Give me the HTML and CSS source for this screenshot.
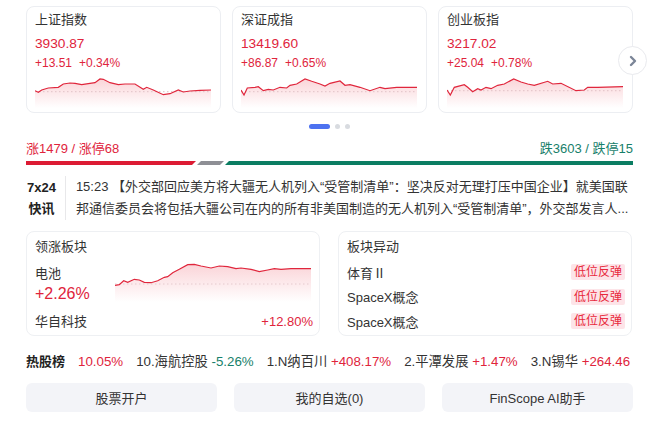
FILE: index.html
```html
<!DOCTYPE html>
<html lang="zh">
<head>
<meta charset="utf-8">
<link rel="stylesheet" href="styles.css">
</head>
<body>
<div class="page">
  <div class="carousel">
    <div class="cards">
      <div class="card">
        <div class="c-title">上证指数</div>
        <div class="c-value">3930.87</div>
        <div class="c-change"><span>+13.51</span><span>+0.34%</span></div>
        <svg class="spark" viewBox="0 0 176 30" preserveAspectRatio="none">
          <defs><linearGradient id="g1" x1="0" y1="0" x2="0" y2="1"><stop offset="0" stop-color="#e8283c" stop-opacity="0.2"/><stop offset="1" stop-color="#e8283c" stop-opacity="0"/></linearGradient></defs>
          <path d="M0,12.7 L3.3,14.3 L6.7,12 L13.3,10 L23.3,9.3 L28.3,6 L35,5 L40,5.3 L46.7,6.7 L53.3,5.7 L60,4.7 L65,0.9 L68.3,1.3 L75,4.7 L83.3,6.7 L90,6 L100,6 L108.3,11.3 L111.7,9.3 L118.3,12 L128.3,16.7 L135,15.7 L143.3,12 L148.3,14 L155,13 L165,12.3 L176,12 L176,30 L0,30 Z" fill="url(#g1)"/>
          <line x1="0" y1="13.7" x2="176" y2="13.7" stroke="#e6c9cd" stroke-width="1.2" stroke-dasharray="1.5 2.5"/>
          <polyline points="0,12.7 3.3,14.3 6.7,12 13.3,10 23.3,9.3 28.3,6 35,5 40,5.3 46.7,6.7 53.3,5.7 60,4.7 65,0.9 68.3,1.3 75,4.7 83.3,6.7 90,6 100,6 108.3,11.3 111.7,9.3 118.3,12 128.3,16.7 135,15.7 143.3,12 148.3,14 155,13 165,12.3 176,12" fill="none" stroke="#e0263c" stroke-width="1.2"/>
        </svg>
      </div>
      <div class="card">
        <div class="c-title">深证成指</div>
        <div class="c-value">13419.60</div>
        <div class="c-change"><span>+86.87</span><span>+0.65%</span></div>
        <svg class="spark" viewBox="0 0 176 30" preserveAspectRatio="none">
          <defs><linearGradient id="g2" x1="0" y1="0" x2="0" y2="1"><stop offset="0" stop-color="#e8283c" stop-opacity="0.2"/><stop offset="1" stop-color="#e8283c" stop-opacity="0"/></linearGradient></defs>
          <path d="M0,12 L3,17 L6.3,10 L14,9.3 L17.3,8.7 L22.3,12.7 L27.3,11.3 L32.3,12 L39,9.3 L45.7,10 L49,7.3 L55.7,6 L64,0.9 L70.7,3.3 L79,6 L84,8 L89,5.3 L99,3 L104,7.3 L109,6.7 L119,9.3 L129,12.7 L139,9.3 L144,10.7 L155.7,9.3 L176,9.3 L176,30 L0,30 Z" fill="url(#g2)"/>
          <line x1="0" y1="13.7" x2="176" y2="13.7" stroke="#e6c9cd" stroke-width="1.2" stroke-dasharray="1.5 2.5"/>
          <polyline points="0,12 3,17 6.3,10 14,9.3 17.3,8.7 22.3,12.7 27.3,11.3 32.3,12 39,9.3 45.7,10 49,7.3 55.7,6 64,0.9 70.7,3.3 79,6 84,8 89,5.3 99,3 104,7.3 109,6.7 119,9.3 129,12.7 139,9.3 144,10.7 155.7,9.3 176,9.3" fill="none" stroke="#e0263c" stroke-width="1.2"/>
        </svg>
      </div>
      <div class="card">
        <div class="c-title">创业板指</div>
        <div class="c-value">3217.02</div>
        <div class="c-change"><span>+25.04</span><span>+0.78%</span></div>
        <svg class="spark" viewBox="0 0 176 30" preserveAspectRatio="none">
          <defs><linearGradient id="g3" x1="0" y1="0" x2="0" y2="1"><stop offset="0" stop-color="#e8283c" stop-opacity="0.2"/><stop offset="1" stop-color="#e8283c" stop-opacity="0"/></linearGradient></defs>
          <path d="M0,12 L3.3,17 L7.3,9.3 L17.3,6.7 L20.7,9.3 L25.7,13.7 L30.7,10.7 L34,12 L39,9.3 L44,10.7 L50.7,7.3 L57.3,6 L66.7,0.9 L74,4 L80.7,6 L87.3,7.3 L100.7,3.3 L105.7,6 L114,5.3 L129,12.7 L137.3,12 L140.7,9.3 L150.7,9.3 L176,8.7 L176,30 L0,30 Z" fill="url(#g3)"/>
          <line x1="0" y1="12.7" x2="176" y2="12.7" stroke="#e6c9cd" stroke-width="1.2" stroke-dasharray="1.5 2.5"/>
          <polyline points="0,12 3.3,17 7.3,9.3 17.3,6.7 20.7,9.3 25.7,13.7 30.7,10.7 34,12 39,9.3 44,10.7 50.7,7.3 57.3,6 66.7,0.9 74,4 80.7,6 87.3,7.3 100.7,3.3 105.7,6 114,5.3 129,12.7 137.3,12 140.7,9.3 150.7,9.3 176,8.7" fill="none" stroke="#e0263c" stroke-width="1.2"/>
        </svg>
      </div>
    </div>
    <div class="next-btn">
      <svg viewBox="0 0 12 12" width="12" height="12"><polyline points="4,2 8,6 4,10" fill="none" stroke="#7b8597" stroke-width="2.4" stroke-linecap="round" stroke-linejoin="round"/></svg>
    </div>
  </div>

  <div class="dots"><span class="dot active"></span><span class="dot"></span><span class="dot"></span></div>

  <div class="breadth">
    <span class="up">涨1479 / 涨停68</span>
    <span class="down">跌3603 / 跌停15</span>
  </div>
  <div class="bar">
    <span class="seg seg-red"></span>
    <span class="seg seg-grey"></span>
    <span class="seg seg-green"></span>
  </div>

  <div class="news">
    <div class="news-label"><div>7x24</div><div>快讯</div></div>
    <div class="news-text">15:23 【外交部回应美方将大疆无人机列入“受管制清单”：坚决反对无理打压中国企业】就美国联邦通信委员会将包括大疆公司在内的所有非美国制造的无人机列入“受管制清单”，外交部发言人...</div>
  </div>

  <div class="sectors">
    <div class="s-card">
      <div class="s-title">领涨板块</div>
      <div class="s-main">
        <div class="s-left">
          <div class="s-name">电池</div>
          <div class="s-pct">+2.26%</div>
        </div>
        <svg class="s-chart" viewBox="0 0 196 41" preserveAspectRatio="none">
          <defs><linearGradient id="g4" x1="0" y1="0" x2="0" y2="1"><stop offset="0" stop-color="#e8283c" stop-opacity="0.2"/><stop offset="1" stop-color="#e8283c" stop-opacity="0"/></linearGradient></defs>
          <path d="M0,24.3 L4.3,23.7 L8.7,19.7 L12.7,21.3 L19.3,18.3 L24.3,19 L29.3,21.3 L36,21.7 L42.7,19.7 L49.3,16.3 L52.7,15.7 L57.7,11.7 L64.3,8.3 L72.7,3.7 L79.3,3.3 L86,5 L96,7 L104.3,5 L112.7,5.7 L121,7.7 L126,7 L136,8.3 L144.3,10.7 L152.7,9 L159.3,7.7 L166,8.3 L176,7.7 L196,7.7 L196,41 L0,41 Z" fill="url(#g4)"/>
          <line x1="0" y1="23" x2="196" y2="23" stroke="#e6c9cd" stroke-width="1.2" stroke-dasharray="1.5 2.5"/>
          <polyline points="0,24.3 4.3,23.7 8.7,19.7 12.7,21.3 19.3,18.3 24.3,19 29.3,21.3 36,21.7 42.7,19.7 49.3,16.3 52.7,15.7 57.7,11.7 64.3,8.3 72.7,3.7 79.3,3.3 86,5 96,7 104.3,5 112.7,5.7 121,7.7 126,7 136,8.3 144.3,10.7 152.7,9 159.3,7.7 166,8.3 176,7.7 196,7.7" fill="none" stroke="#e0263c" stroke-width="1.2"/>
        </svg>
      </div>
      <div class="s-foot"><span>华自科技</span><span class="red">+12.80%</span></div>
    </div>
    <div class="s-card">
      <div class="s-title">板块异动</div>
      <div class="s-row"><span>体育<span class="cjk">Ⅱ</span></span><span class="tag">低位反弹</span></div>
      <div class="s-row"><span>SpaceX概念</span><span class="tag">低位反弹</span></div>
      <div class="s-row"><span>SpaceX概念</span><span class="tag">低位反弹</span></div>
    </div>
  </div>

  <div class="hot">
    <span class="hot-title">热股榜</span>
    <span class="red">10.05%</span>
    <span>10.海航控股 <span class="green">-5.26%</span></span>
    <span>1.N纳百川 <span class="red">+408.17%</span></span>
    <span>2.平潭发展 <span class="red">+1.47%</span></span>
    <span>3.N锡华 <span class="red">+264.46</span></span>
  </div>

  <div class="buttons">
    <div class="btn">股票开户</div>
    <div class="btn">我的自选(0)</div>
    <div class="btn">FinScope AI助手</div>
  </div>
</div>
</body>
</html>
```

FILE: styles.css
```css
* { box-sizing: border-box; }
html, body { margin: 0; padding: 0; background: #fff; }
body {
  font-family: "Liberation Sans", Arial, "Noto Sans CJK SC", sans-serif;
  color: #333;
  font-size: 13px;
  overflow: hidden;
}
.page {
  width: 607px;
  margin-left: 26px;
  padding-top: 6px;
}
.carousel { position: relative; }
.cards {
  display: grid;
  grid-template-columns: repeat(3, 1fr);
  column-gap: 11px;
  width: 606px;
}
.card {
  border: 1px solid #eceef2;
  border-radius: 8px;
  padding: 4px 9px 4px 8px;
  height: 107px;
  display: flex;
  flex-direction: column;
}
.c-title { font-size: 13px; line-height: 18px; color: #333; }
.c-value { font-size: 13.7px; line-height: 20px; margin-top: 5px; color: #e0243c; }
.c-change { font-size: 12px; line-height: 18px; color: #e0243c; display: flex; gap: 7px; }
.spark { display: block; width: 176px; height: 30px; margin-top: 6px; }
.next-btn {
  position: absolute;
  left: 592px;
  top: 40px;
  width: 29px;
  height: 29px;
  border-radius: 50%;
  background: #fff;
  border: 1px solid #e9eaee;
  display: flex;
  align-items: center;
  justify-content: center;
}
.next-btn svg { display: block; }
.dots {
  display: flex;
  justify-content: center;
  gap: 5px;
  margin-top: 11px;
}
.dot { width: 5px; height: 5px; border-radius: 3px; background: #d8dbe0; }
.dot.active { width: 21px; background: #4d72f0; }
.breadth {
  display: flex;
  justify-content: space-between;
  margin-top: 11px;
  font-size: 13px;
  line-height: 18px;
}
.up { color: #e0243c; }
.down { color: #17806a; }
.bar { display: flex; gap: 1px; height: 4px; margin-top: 3px; }
.seg { display: block; height: 100%; }
.seg-red { width: 170px; background: #dc1b33; clip-path: polygon(0 0, 100% 0, calc(100% - 4px) 100%, 0 100%); }
.seg-grey { width: 27px; background: #8e8f95; clip-path: polygon(4px 0, 100% 0, calc(100% - 4px) 100%, 0 100%); }
.seg-green { flex: 1; background: #0b7d62; clip-path: polygon(4px 0, 100% 0, 100% 100%, 0 100%); }
.news { display: flex; margin-top: 11px; }
.news-label {
  width: 31px;
  font-weight: bold;
  text-align: center;
  font-size: 13px;
  line-height: 21px;
  padding-top: 1px;
  color: #222;
}
.news-text {
  margin-left: 8px;
  border-left: 1px solid #e8e8ea;
  padding-left: 10px;
  width: 570px;
  line-height: 22px;
  font-size: 13px;
  color: #333;
}
.sectors {
  display: grid;
  grid-template-columns: 1fr 1fr;
  column-gap: 18px;
  width: 606px;
  margin-top: 11px;
}
.s-card {
  border: 1px solid #eef0f3;
  border-radius: 8px;
  height: 105px;
  padding: 6px 6px 0 8px;
}
.s-title { line-height: 17px; font-size: 13px; }
.s-main { display: flex; margin-top: 6px; height: 43px; }
.s-left { width: 80px; padding-top: 3px; }
.s-name { font-size: 13px; line-height: 20px; }
.s-pct { font-size: 16px; line-height: 20px; color: #e0243c; }
.s-chart { display: block; width: 196px; height: 41px; }
.s-foot { display: flex; justify-content: space-between; margin-top: 9px; line-height: 18px; }
.s-row {
  display: flex;
  justify-content: space-between;
  align-items: center;
  height: 24.5px;
}
.s-title + .s-row { margin-top: 5px; }
.cjk { font-family: "Noto Sans CJK SC", sans-serif; }
.tag {
  background: #fde4e8;
  color: #e8283c;
  font-size: 12px;
  line-height: 16px;
  padding: 0 3px;
  border-radius: 2px;
}
.red { color: #e0243c; }
.green { color: #17806a; }
.hot {
  display: flex;
  gap: 13px;
  margin-top: 17px;
  font-size: 13.3px;
  line-height: 18px;
  white-space: nowrap;
  width: 608px;
}
.hot-title { font-weight: bold; color: #222; font-size: 13px; }
.buttons {
  display: grid;
  grid-template-columns: repeat(3, 1fr);
  column-gap: 17px;
  margin-top: 12px;
}
.btn {
  height: 29px;
  background: #f3f4f8;
  border-radius: 6px;
  display: flex;
  align-items: center;
  justify-content: center;
  font-size: 13px;
  color: #333;
}
```
